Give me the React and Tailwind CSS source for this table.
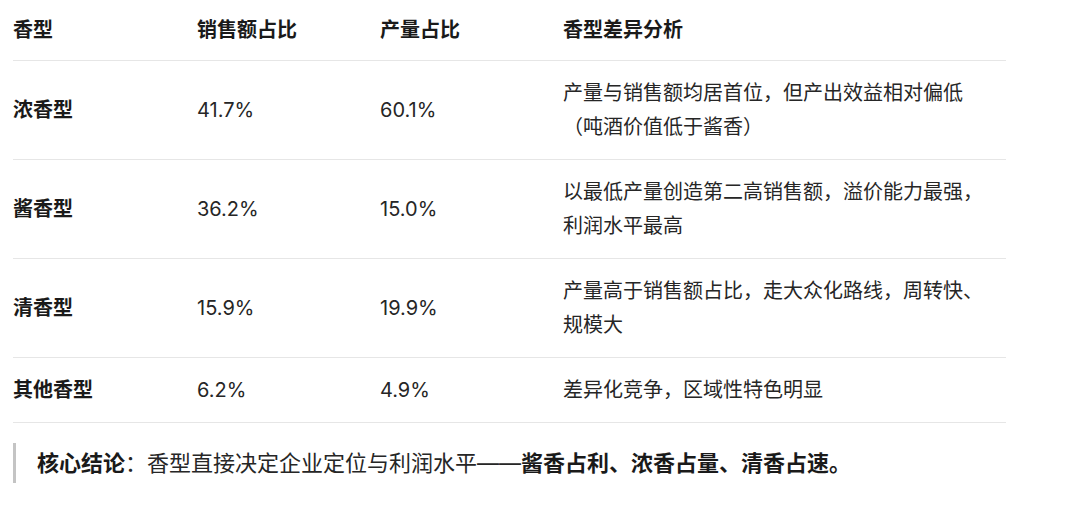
import React from 'react';

const rows = [
  {
    type: '浓香型',
    sales: '41.7%',
    output: '60.1%',
    note: '产量与销售额均居首位，但产出效益相对偏低（吨酒价值低于酱香）',
  },
  {
    type: '酱香型',
    sales: '36.2%',
    output: '15.0%',
    note: '以最低产量创造第二高销售额，溢价能力最强，利润水平最高',
  },
  {
    type: '清香型',
    sales: '15.9%',
    output: '19.9%',
    note: '产量高于销售额占比，走大众化路线，周转快、规模大',
  },
  {
    type: '其他香型',
    sales: '6.2%',
    output: '4.9%',
    note: '差异化竞争，区域性特色明显',
  },
];

const font = { fontFamily: '"Inter", "Noto Sans CJK SC", sans-serif' };

const App = () => {
  return (
    <div className="w-[1080px] h-[523px] bg-white overflow-hidden" style={font}>
      <div className="ml-[13px] w-[993px]">
        <div className="grid grid-cols-[184px_183px_183px_443px] border-b border-[#e6e6e6] text-[20px] leading-[34px] font-bold text-[#1a1a1a]">
          <div className="pt-[13px] pb-[13px]">香型</div>
          <div className="pt-[13px] pb-[13px]">销售额占比</div>
          <div className="pt-[13px] pb-[13px]">产量占比</div>
          <div className="pt-[13px] pb-[13px] pr-[13px]">香型差异分析</div>
        </div>

        {rows.map((row) => (
          <div
            key={row.type}
            className="grid grid-cols-[184px_183px_183px_443px] items-center border-b border-[#e6e6e6] text-[20px] leading-[34px] text-[#262626]"
          >
            <div className="py-[15px] font-bold text-[#1a1a1a]">{row.type}</div>
            <div className="py-[15px]">{row.sales}</div>
            <div className="py-[15px]">{row.output}</div>
            <div className="py-[15px] pr-[13px]">{row.note}</div>
          </div>
        ))}
      </div>

      <div className="mt-[20px] ml-[13px] border-l-[3px] border-[#c4c4c4] pl-[21px] py-[3px] text-[22px] leading-[34px] text-[#262626]">
        <span className="font-bold text-[#1a1a1a]">核心结论</span>：香型直接决定企业定位与利润水平——
        <span className="font-bold text-[#1a1a1a]">酱香占利、浓香占量、清香占速。</span>
      </div>
    </div>
  );
};

export default App;
